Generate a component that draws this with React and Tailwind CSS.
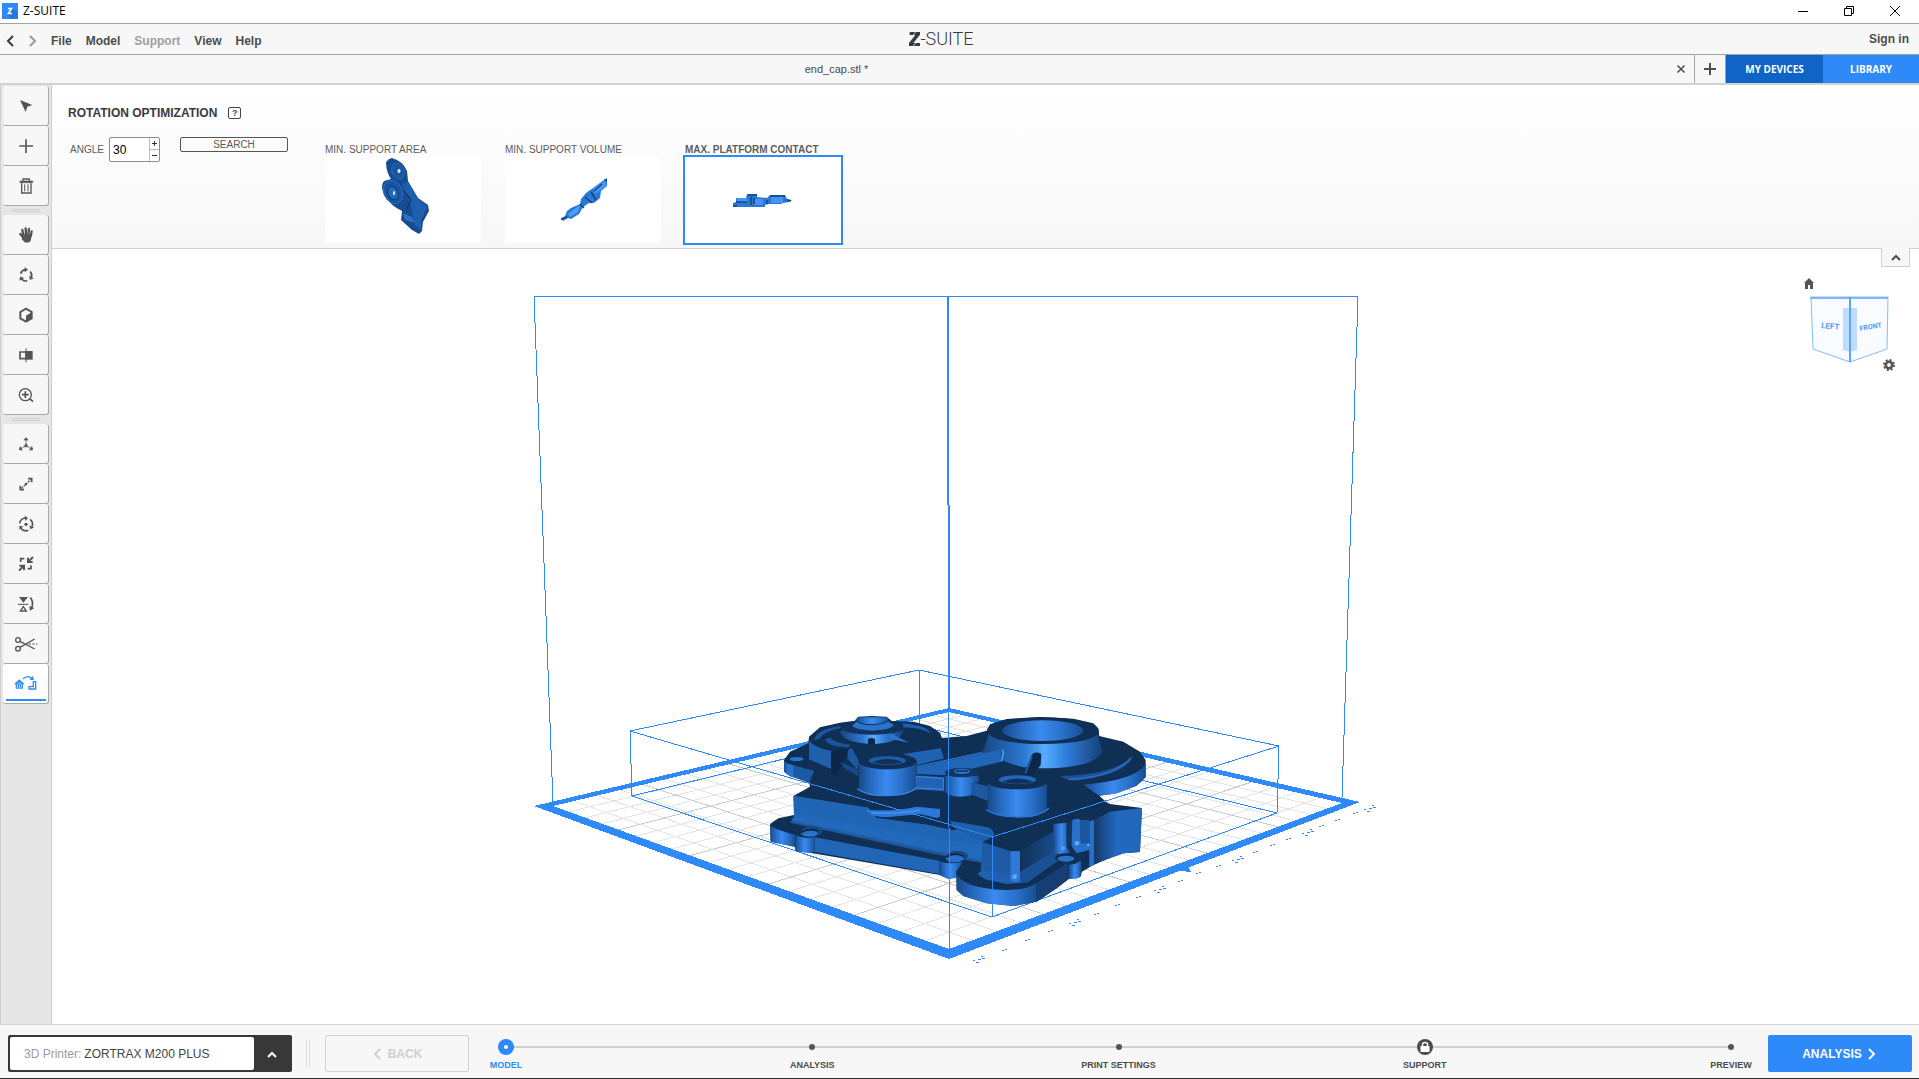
import { useState } from 'react'
import clsx from 'clsx'

const BLUE = '#2d8af8'

const MENU = ['File', 'Model', 'Support', 'View', 'Help']

const STEPS = [
  { label: 'MODEL', state: 'active' },
  { label: 'ANALYSIS' },
  { label: 'PRINT SETTINGS' },
  { label: 'SUPPORT', state: 'locked' },
  { label: 'PREVIEW' },
]

const arc3 = [0, 120, 240]

// every tool icon is drawn on a 72 x 72 grid
const ICONS = {
  select: <path d="M18 18 55 33 40 38 35 54Z" fill="currentColor" />,
  add: <path d="M36 16V57M16 36H57" stroke="currentColor" strokeWidth="5" fill="none" />,
  remove: (
    <g fill="none" stroke="currentColor" strokeWidth="4">
      <path d="M27 20V15H46V20" />
      <path d="M18 21H56V26H18Z" fill="currentColor" strokeWidth="2" />
      <path d="M23 28V57H51V28" />
      <path d="M32 31V52M42 31V52" strokeWidth="3" />
    </g>
  ),
  pan: (
    <g stroke="currentColor" strokeLinecap="round" strokeWidth="7" fill="currentColor">
      <path d="M28 36 25 21M36 34 35 16M43 34 45 18M50 40 53 25M29 45 19 33" />
      <path d="M28 36H50L48 52 43 56H34L26 48Z" strokeWidth="5" strokeLinejoin="round" />
    </g>
  ),
  orbit: (
    <g fill="none" stroke="currentColor" strokeWidth="5">
      {arc3.map((a) => (
        <g key={a} transform={`rotate(${a} 36 37)`}>
          <path d="M20 32A17 17 0 0 1 34 20" />
          <path d="M32 12 42 20 32 28Z" fill="currentColor" stroke="none" />
        </g>
      ))}
    </g>
  ),
  views: (
    <g>
      <path d="M36 17 53 27V46L36 56 19 46V27Z" fill="none" stroke="currentColor" strokeWidth="6" />
      <path d="M36 38 53 28V46L36 56Z" fill="currentColor" />
    </g>
  ),
  mirrorView: (
    <g>
      <path d="M18 27H36V47H18Z" fill="none" stroke="currentColor" strokeWidth="5" />
      <path d="M36 24H56V50H36Z" fill="currentColor" />
      <path d="M36 16V58" stroke="currentColor" strokeWidth="3" />
    </g>
  ),
  zoom: (
    <g fill="none" stroke="currentColor" strokeWidth="5">
      <circle cx="34" cy="35" r="18" strokeWidth="4" />
      <path d="M34 25V45M24 35H44M47 47 57 56" />
    </g>
  ),
  move: (
    <g>
      <circle cx="36" cy="41" r="5" fill="currentColor" />
      {arc3.map((a) => (
        <g key={a} transform={`rotate(${a} 36 41)`}>
          <path d="M36 36V24" stroke="currentColor" strokeWidth="4" strokeDasharray="4 3" />
          <path d="M28 25 36 16 44 25Z" fill="currentColor" />
        </g>
      ))}
    </g>
  ),
  scale: (
    <g fill="none" stroke="currentColor" strokeWidth="5">
      <path d="M23 49 50 23" strokeDasharray="5 4" />
      <path d="M42 20H53V31M19 41V53H30" />
      <circle cx="36" cy="36" r="4" fill="currentColor" stroke="none" />
    </g>
  ),
  rotate: (
    <g fill="none" stroke="currentColor" strokeWidth="5">
      <circle cx="36" cy="37" r="5" fill="currentColor" stroke="none" />
      {arc3.map((a) => (
        <g key={a} transform={`rotate(${a} 36 37)`}>
          <path d="M17 34A19 19 0 0 1 33 18" />
          <path d="M32 11 42 18 34 27Z" fill="currentColor" stroke="none" />
        </g>
      ))}
    </g>
  ),
  fit: (
    <g fill="none" stroke="currentColor" strokeWidth="6">
      <path d="M20 30V20H31M41 50H51V40" strokeWidth="5" />
      <path d="M57 15 43 29M42 17V30H56M15 56 29 42M16 41H30V54" />
    </g>
  ),
  flip: (
    <g>
      <path d="M15 15H42L28 32Z" fill="currentColor" />
      <path d="M12 37H43" stroke="currentColor" strokeWidth="3" />
      <path d="M19 57H37L28 44Z" fill="none" stroke="currentColor" strokeWidth="4" />
      <path d="M49 17Q60 29 53 48" fill="none" stroke="currentColor" strokeWidth="5" />
      <path d="M46 42 61 48 48 56Z" fill="currentColor" />
    </g>
  ),
  split: (
    <g fill="none" stroke="currentColor" strokeWidth="4">
      <circle cx="12" cy="24" r="7" />
      <circle cx="12" cy="50" r="7" />
      <path d="M18 28 62 51M18 46 62 21" />
      <path d="M44 36H70" strokeWidth="3" strokeDasharray="7 4" />
    </g>
  ),
  optimize: (
    <g fill="none" stroke="currentColor">
      <path d="M0 43 16 28 32 43H27V56H5V43Z" fill="currentColor" stroke="none" />
      <path d="M10 55V43L16 37 22 43V55M16 43V55" stroke="#fff" strokeWidth="2" />
      <path d="M27 27Q41 13 54 26" strokeWidth="4" />
      <path d="M47 30 60 30 56 18Z" fill="currentColor" stroke="none" />
      <path d="M45 50H58V35H65V57H45Z" strokeWidth="4" />
    </g>
  ),
}

const TOOL_GROUPS = [
  [
    ['select', 'Select'],
    ['add', 'Add model'],
    ['remove', 'Remove'],
  ],
  [
    ['pan', 'Pan'],
    ['orbit', 'Orbit'],
    ['views', 'Views'],
    ['mirrorView', 'Shading'],
    ['zoom', 'Zoom'],
  ],
  [
    ['move', 'Move'],
    ['scale', 'Scale'],
    ['rotate', 'Rotate'],
    ['fit', 'Fit'],
    ['flip', 'Mirror'],
    ['split', 'Split'],
    ['optimize', 'Rotation optimization'],
  ],
]

function Chevron({ dir, className }) {
  const paths = { left: 'M8 1 3 6 8 11', right: 'M3 1 8 6 3 11', up: 'M2 9 6 5 10 9' }
  return (
    <svg viewBox="0 0 12 12" className={clsx('size-3', className)} fill="none" stroke="currentColor" strokeWidth="2">
      <path d={paths[dir]} />
    </svg>
  )
}

function TitleBar() {
  return (
    <header className="flex h-6 shrink-0 items-center border-b border-[#a3a3a3] bg-white pb-px pl-[2px]">
      <svg viewBox="0 0 16 16" className="size-4">
        <path d="M0 0H16V16H0Z" fill={BLUE} />
        <path d="M10 5 16 10V16H9L6 11Z" fill="#2678dc" />
        <path d="M6 5.5H9.5L6.5 10.5H10" fill="none" stroke="#fff" strokeWidth="1.6" />
      </svg>
      <span className="ml-[5px] font-['Open_Sans',sans-serif] text-xs text-black">Z-SUITE</span>
      <div className="mr-[19px] ml-auto flex gap-9 text-black">
        <button aria-label="Minimize">
          <svg viewBox="0 0 10 10" className="size-[10px]" stroke="currentColor"><path d="M0 5.5H10" /></svg>
        </button>
        <button aria-label="Restore">
          <svg viewBox="0 0 10 10" className="size-[10px]" stroke="currentColor" fill="none"><path d="M.5 2.5H7.5V9.5H.5ZM2.5 2.5V.5H9.5V7.5H7.5" /></svg>
        </button>
        <button aria-label="Close">
          <svg viewBox="0 0 10 10" className="size-[10px]" stroke="currentColor"><path d="M0 0 10 10M10 0 0 10" /></svg>
        </button>
      </div>
    </header>
  )
}

function MenuBar() {
  return (
    <nav className="flex h-[31px] shrink-0 items-center border-b border-[#a3a3a3] bg-[#f7f7f7] font-bold">
      <div className="flex flex-1 items-center pt-[3px]">
        <button aria-label="Undo" className="ml-[5px]"><Chevron dir="left" className="text-[#3a3a3a]" /></button>
        <button aria-label="Redo" className="ml-[10px]"><Chevron dir="right" className="text-[#9a9a9a]" /></button>
        <div className="ml-3 flex gap-[14px]">
          {MENU.map((m) => (
            <button key={m} disabled={m === 'Support'} className="disabled:text-[#9f9f9f]">{m}</button>
          ))}
        </div>
      </div>
      <div className="mr-[26px] flex items-center text-[18px] leading-5 text-[#3a3a3a]">
        <svg viewBox="0 0 33 42" className="h-[14px] w-[11px]" fill="currentColor">
          <path d="M2 0H33V8L13 33H33V42H0V33L19 9H2Z" />
          <path d="M0 24 20 0M13 42 33 18" stroke="#f7f7f7" strokeWidth="2" />
        </svg>
        <span className="font-['Roboto',sans-serif] font-light">-SUITE</span>
      </div>
      <div className="flex flex-1 justify-end pr-[10px] pb-px">
        <button>Sign in</button>
      </div>
    </nav>
  )
}

function TabBar() {
  return (
    <div className="flex h-[30px] shrink-0 border-b-2 border-[#d2d2d2] bg-[#f7f7f7]">
      <div className="flex flex-1 items-center">
        <span className="flex-1 pr-1 text-center text-[11px] text-[#4a4a4a]">end_cap.stl *</span>
        <button aria-label="Close tab" className="mr-[9px]">
          <svg viewBox="0 0 8 8" className="size-2" stroke="currentColor" strokeWidth="1.5"><path d="M.5 .5 7.5 7.5M7.5 .5 .5 7.5" /></svg>
        </button>
      </div>
      <button aria-label="New tab" className="flex w-8 items-center justify-center border-x border-[#a3a3a3]">
        <svg viewBox="0 0 12 12" className="size-3" stroke="currentColor" strokeWidth="2"><path d="M6 0V12M0 6H12" /></svg>
      </button>
      <div className="flex font-['Open_Sans',sans-serif] text-[10px] font-bold text-white">
        <button className="w-[97px] bg-[#1064c8] pt-[2px]">MY DEVICES</button>
        <button className="w-24 bg-[#2d8af8] pt-[2px]">LIBRARY</button>
      </div>
    </div>
  )
}

function Sidebar() {
  const [active, setActive] = useState('optimize')
  return (
    <aside className="w-[52px] shrink-0 border-x border-[#cfcfcf] bg-[#e6e6e6] px-[2px] pt-px">
      {TOOL_GROUPS.map((group, i) => (
        <div key={i}>
          {i > 0 && (
            <div className="flex h-[9px] items-center justify-center">
              <div className="h-[3px] w-7 border-y border-[#cdcfd4]" />
            </div>
          )}
          {group.map(([id, label]) => (
            <button
              key={id}
              aria-label={label}
              aria-pressed={active === id}
              onClick={() => setActive(id)}
              className={clsx(
                'flex h-10 w-[46px] flex-col items-center justify-end rounded-[3px] border-r border-b border-[#a9a9a9]',
                active === id ? 'bg-white text-[#2d8af8]' : 'bg-[#f7f7f7] text-[#555]',
              )}
            >
              <svg viewBox="0 0 72 72" className="my-auto size-6 overflow-visible">{ICONS[id]}</svg>
              {active === id && <span className="mb-[2px] h-[2px] w-10 bg-[#2d8af8]" />}
            </button>
          ))}
        </div>
      ))}
    </aside>
  )
}

function AreaPreview() {
  return (
    <svg viewBox="0 0 156 86" className="size-full">
      <path d="M61 5 64 2 67 1Q78 4 82 14L83 24 93 41 103 48 104 54 98 65 97 74 94 77 87 73 76 63 77 54Q66 49 59 38 55 28 59 24L66 22Q61 15 61 5Z" fill="#174d90" />
      <path d="M83 25 93 42 102 50 97 61 96 73 90 68 88 58 84 44 77 27Z" fill="#1e60ae" />
      <ellipse cx="73" cy="14" rx="6" ry="8" fill="#1a559f" stroke="#2468b8" transform="rotate(-25 73 14)" />
      <ellipse cx="74" cy="14" rx="1.5" ry="2" fill="#e8f2ff" />
      <ellipse cx="68" cy="35" rx="9" ry="12" fill="#1a559f" stroke="#276fc4" transform="rotate(-25 68 35)" />
      <ellipse cx="68" cy="36" rx="5" ry="7" fill="#2368b9" stroke="#123a6d" transform="rotate(-25 68 36)" />
      <ellipse cx="69" cy="36" rx="1" ry="2" fill="#e8f2ff" />
      <path d="M78 56 87 60 90 66 80 63Z" fill="#2a72c8" />
      <path d="M79 34 86 43 82 52" fill="none" stroke="#123a6d" strokeWidth="1.5" />
    </svg>
  )
}

function VolumePreview() {
  return (
    <svg viewBox="0 0 156 86" className="size-full">
      <path d="M56 62 60 59 62 54 66 51 75 47 76 42 81 36 88 31 99 23 102 21 102 29 96 34 95 41 89 46 84 46 78 50 74 57 66 62 63 61 58 64Z" fill="#2b78d4" />
      <path d="M88 31 100 24 102 29 90 37Z" fill="#4496f6" />
      <path d="M63 57 75 48 73 55 65 60Z" fill="#4aa0ff" />
      <path d="M80 40 87 46M86 35 91 43M75 47 79 51M56 62 62 60M89 34 97 27" stroke="#14457f" strokeWidth="1.5" fill="none" />
      <path d="M99 22 102 22 102 25Z" fill="#14457f" />
    </svg>
  )
}

function ContactPreview() {
  return (
    <svg viewBox="0 0 156 86" className="size-full">
      <path d="M48 49V46L51 45V41H61L62 37H72V40L82 41 85 38H100L102 42 107 43 104 45 98 46 96 47H84L80 48V50H48Z" fill="#2b78d4" />
      <path d="M52 41H62V45H52ZM70 42H78V48H70ZM86 40H98V46H86Z" fill="#4496f6" />
      <path d="M63 38H72M66 40V48M62 45H51M82 43V47M85 39H100M102 43 106 44M69 41V47M48 49H52" stroke="#14457f" strokeWidth="1.5" fill="none" />
    </svg>
  )
}

const RESULTS = [
  { label: 'MIN. SUPPORT AREA', Preview: AreaPreview },
  { label: 'MIN. SUPPORT VOLUME', Preview: VolumePreview },
  { label: 'MAX. PLATFORM CONTACT', Preview: ContactPreview },
]

function OptimizationPanel() {
  const [angle, setAngle] = useState(30)
  const [selected, setSelected] = useState(2)
  return (
    <section className="relative h-[164px] shrink-0 border-b border-[#cfcfcf] bg-linear-to-b from-white to-[#f7f7f7] pt-5">
      <div className="flex h-4 items-center pl-4">
        <h1 className="text-xs font-bold text-[#3a3a3a]">ROTATION OPTIMIZATION</h1>
        <button aria-label="Help" className="ml-[11px] flex h-3 w-[13px] items-center justify-center rounded-[2px] border border-[#444] text-[9px] leading-none font-bold">?</button>
      </div>
      <div className="flex items-start pt-4 pl-[18px] text-[10px] leading-3 text-[#5c5c5c]">
        <label htmlFor="angle" className="w-[39px] pt-[7px]">ANGLE</label>
        <div className="flex h-[25px] w-[51px] rounded-[2px] border border-[#8c8c8c] bg-white">
          <input id="angle" value={angle} onChange={(e) => setAngle(e.target.value)} className="w-[39px] pt-px pl-[3px] text-xs text-black outline-none" />
          <div className="flex flex-1 flex-col border-l border-[#bdbdbd] text-[#333]">
            <button aria-label="Increase" onClick={() => setAngle(Number(angle) + 1)} className="flex flex-1 items-center justify-center border-b border-[#bdbdbd]">
              <svg viewBox="0 0 5 5" className="size-[5px]" stroke="currentColor"><path d="M2.5 0V5M0 2.5H5" /></svg>
            </button>
            <button aria-label="Decrease" onClick={() => setAngle(Number(angle) - 1)} className="flex flex-1 items-center justify-center">
              <svg viewBox="0 0 5 5" className="size-[5px]" stroke="currentColor"><path d="M0 2.5H5" /></svg>
            </button>
          </div>
        </div>
        <button className="ml-5 h-[15px] w-[108px] rounded-[2px] border border-[#555] bg-[#fbfbfb]">SEARCH</button>
        <div className="ml-[35px] flex gap-5 pt-[6px]">
          {RESULTS.map(({ label, Preview }, i) => (
            <button key={label} onClick={() => setSelected(i)} className={clsx('w-40 text-left', selected === i && 'font-bold')}>
              <span className="block h-3 pl-[2px] leading-[14px]">{label}</span>
              <span className={clsx('block h-[90px] border-2 bg-white bg-clip-padding', selected === i ? 'border-[#2d8af8]' : 'border-transparent')}>
                <Preview />
              </span>
            </button>
          ))}
        </div>
      </div>
      <button aria-label="Collapse panel" className="absolute top-[163px] right-[9px] z-10 flex h-[19px] w-[29px] items-center justify-center border border-t-0 border-[#cfcfcf] bg-[#f7f7f7]">
        <Chevron dir="up" />
      </button>
    </section>
  )
}

// maps the unit square onto the platform: left, back, right, front corners
function makeProjection([x0, y0], [x1, y1], [x2, y2], [x3, y3]) {
  const dx1 = x1 - x2
  const dx2 = x3 - x2
  const dy1 = y1 - y2
  const dy2 = y3 - y2
  const sx = x0 - x1 + x2 - x3
  const sy = y0 - y1 + y2 - y3
  const d = dx1 * dy2 - dx2 * dy1
  const g = (sx * dy2 - dx2 * sy) / d
  const h = (dx1 * sy - sx * dy1) / d
  return (u, v) => {
    const w = g * u + h * v + 1
    return [((x1 - x0 + g * x1) * u + (x3 - x0 + h * x3) * v + x0) / w, ((y1 - y0 + g * y1) * u + (y3 - y0 + h * y3) * v + y0) / w]
  }
}

const project = makeProjection([550, 807], [949, 711], [1344, 803], [949, 950])

function GridLines() {
  const lines = []
  for (let i = 1; i < 20; i++) {
    const t = i / 20
    lines.push({ major: i % 4 === 0, a: project(t, 0), b: project(t, 1) })
    lines.push({ major: i % 4 === 0, a: project(0, t), b: project(1, t) })
  }
  lines.sort((p, q) => p.major - q.major)
  return lines.map(({ major, a, b }, i) => (
    <line key={i} x1={a[0]} y1={a[1]} x2={b[0]} y2={b[1]} stroke={major ? '#cbcbcb' : '#e4e4e4'} />
  ))
}

const SCALE_MARKS = [
  [978, 959, 1], [1004, 950], [1027, 940], [1050, 931], [1074, 922, 1], [1096, 914], [1117, 905], [1138, 897],
  [1159, 889, 1], [1180, 881], [1198, 873], [1218, 866], [1237, 859, 1], [1255, 852], [1272, 845], [1288, 839],
  [1307, 832, 1], [1321, 826], [1337, 820], [1355, 813], [1369, 808, 1],
]

function EndCap() {
  return (
    <g transform="translate(740 690) scale(.3333)">
      <defs>
        <linearGradient id="cyl">
          <stop offset="0" stopColor="#174a8a" />
          <stop offset=".2" stopColor="#2468bc" />
          <stop offset=".48" stopColor="#3b8af0" />
          <stop offset=".75" stopColor="#2870c8" />
          <stop offset="1" stopColor="#184e92" />
        </linearGradient>
        <linearGradient id="cone">
          <stop offset="0" stopColor="#164580" />
          <stop offset=".35" stopColor="#2d78d2" />
          <stop offset=".52" stopColor="#58acff" />
          <stop offset=".7" stopColor="#2f7cda" />
          <stop offset="1" stopColor="#153f76" />
        </linearGradient>
        <linearGradient id="fillet" gradientUnits="userSpaceOnUse" x1="440" y1="415" x2="428" y2="472">
          <stop offset="0" stopColor="#2268bb" />
          <stop offset=".55" stopColor="#2369bc" />
          <stop offset="1" stopColor="#12345e" />
        </linearGradient>
        <linearGradient id="side">
          <stop offset="0" stopColor="#13365f" />
          <stop offset=".25" stopColor="#1a5093" />
          <stop offset=".5" stopColor="#226abf" />
          <stop offset="1" stopColor="#2166b9" />
        </linearGradient>
        <linearGradient id="shade">
          <stop offset="0" stopColor="#12325a" />
          <stop offset="1" stopColor="#194c8c" />
        </linearGradient>
      </defs>

      {/* silhouette */}
      <path
        fill="#102f55"
        d="M132 210 150 185 205 160 207 140 240 112 300 98 345 92 355 80 395 78 440 80 455 93 520 95 570 108 600 128 606 144 680 138 740 122 750 103 800 87 900 81 1000 86 1060 100 1075 115 1078 138 1150 155 1200 185 1217 210V262L1190 287 1130 310 1078 317 1098 335 1110 342 1206 354 1200 486 1150 490 1100 508 1060 525 1026 545 1020 562 987 566 950 595 890 635 820 648 740 640 670 618 650 600V562L625 567 600 555 210 488 168 484 165 470 92 455 90 402 115 385 162 375 160 318 210 290 208 278 150 258 132 245Z"
      />

      {/* small disc, back left */}
      <path d="M132 212Q136 220 160 226L222 242 208 277 150 258 132 245Z" fill="#1d5aa4" />
      <path d="M140 220 160 226V262L140 252Z" fill="#2a72ca" />
      <path d="M207 152Q222 172 275 183V238L207 208Z" fill="#1f5fab" />
      <path d="M222 150Q230 118 300 108L303 114Q250 124 238 148Z" fill="#1c569c" />
      <path d="M488 100Q560 106 572 130Q540 112 490 112Z" fill="#1f60ae" />
      <path d="M255 150Q270 172 325 172L332 164Q290 162 268 142Z" fill="#1b5398" />
      <path d="M300 125Q310 158 395 162Q478 160 492 122L455 105H345Z" fill="url(#cone)" />
      <path d="M302 118Q330 96 350 96H450Q480 100 492 118Q470 134 396 134Q330 134 302 118Z" fill="#11325c" />
      <path d="M336 108Q350 120 396 122Q450 120 462 106L442 92H352Z" fill="#2a72ca" />
      <path d="M347 93 352 82H440L448 93Q440 104 396 104 355 104 347 93Z" fill="url(#cyl)" />
      <path d="M347 90Q362 105 396 104T448 90" fill="none" stroke="#11325c" strokeWidth="3" />
      <path d="M384 162V148Q394 140 405 148V162Z" fill="#0e2749" />
      <path d="M446 138 455 148 508 158 450 130Z" fill="#2c76d0" />
      <path d="M325 180 335 174 358 215 352 240 322 205Z" fill="#1d59a2" />
      <path d="M273 185 322 175 310 215 288 260 273 250Z" fill="#0e2749" />
      <path d="M300 215 355 240 355 258 316 238Z" fill="#174a88" />
      <ellipse cx="170" cy="207" rx="21" ry="6" fill="#2b74cd" />
      <path d="M490 192 602 175 612 205 530 226V212Z" fill="#2062b2" />
      <path d="M530 232 785 177V215L612 256 530 252Z" fill="#2165b6" />
      <path d="M530 230 778 176" stroke="#3280dc" strokeWidth="3" />

      {/* large ring, back right */}
      <path d="M960 258Q1130 254 1178 196Q1170 250 1010 272 985 274 960 258Z" fill="#1b5296" />
      <path d="M985 268Q1120 262 1172 205" fill="none" stroke="#2a72ca" strokeWidth="4" />
      <path d="M1030 284Q1190 270 1217 222V262L1190 287 1130 310 1078 317Z" fill="url(#cyl)" />
      <path d="M725 190Q745 150 750 112Q820 160 910 160T1070 125L1088 185Q1060 236 900 235 830 234 787 210L785 178Z" fill="url(#cone)" />
      <path d="M742 120Q750 84 905 82 1060 84 1077 122 1070 161 905 162 745 160 742 120Z" fill="#102f55" />
      <ellipse cx="908" cy="122" rx="122" ry="31" fill="url(#cyl)" />
      <path d="M787 178 790 190 785 214" stroke="#4a9cf8" strokeWidth="5" fill="none" />
      <path d="M875 195Q885 182 904 192L902 225 878 256 852 252Z" fill="#0d2748" />
      <path d="M876 200 856 250" stroke="#1f5ca4" strokeWidth="5" />

      {/* posts and ribs */}
      <path d="M522 256 612 262V304L522 298Z" fill="#2263b3" />
      <path d="M528 260 610 265V298L526 294Z" fill="none" stroke="#3a88ea" strokeWidth="3" />
      <path d="M695 275 745 290V333L695 314Z" fill="#1d58a0" />
      <path d="M614 258H716V275L695 280V316Q655 325 625 314L614 304Z" fill="url(#cyl)" />
      <ellipse cx="665" cy="248" rx="50" ry="14" fill="#123763" />
      <ellipse cx="666" cy="244" rx="24" ry="8" fill="#2a72ca" />
      <path d="M648 243H684" stroke="#0e2749" strokeWidth="4" />

      <path d="M357 215V300Q375 316 443 317 510 314 528 296V215Z" fill="url(#cyl)" />
      <path d="M352 296Q380 318 443 317T532 292" fill="none" stroke="#3884e4" strokeWidth="4" />
      <ellipse cx="443" cy="214" rx="87" ry="24" fill="#102f55" />
      <ellipse cx="442" cy="212" rx="56" ry="13" fill="#1f5dab" />
      <path d="M396 217Q442 196 490 217 442 230 396 217Z" fill="#113158" />

      <path d="M743 282V360Q760 380 832 381 905 378 921 356V282Z" fill="url(#cyl)" />
      <path d="M738 358Q765 380 832 381T927 354" fill="none" stroke="#2f78d6" strokeWidth="4" />
      <ellipse cx="832" cy="276" rx="90" ry="22" fill="#102f55" />
      <ellipse cx="832" cy="269" rx="56" ry="13" fill="#2468bc" />
      <path d="M786 275Q832 256 880 275 832 288 786 275Z" fill="#113158" />

      {/* main body, left face */}
      <path d="M162 318 385 353 410 384 560 404 640 421 700 408 762 428 760 440 728 456V520L590 494 150 398 162 380Z" fill="url(#fillet)" />
      <path d="M162 318 385 353 410 384 560 404 640 421 728 456 700 462 162 372Z" fill="#2064b4" />
      <path d="M380 360Q470 364 530 350L600 357V380L590 384 540 372 440 382Q390 380 380 360Z" fill="#2d78d6" />
      <path d="M395 368Q470 374 540 360" fill="none" stroke="#3f92f6" strokeWidth="5" />
      <path d="M630 392 745 412Q765 420 760 440L728 456 690 440 640 412Z" fill="#1e5eaa" />

      {/* base flange */}
      <path d="M90 402Q92 416 165 434V470L92 455Z" fill="url(#cyl)" />
      <path d="M225 442 598 512V552L225 486Z" fill="#2165b6" />
      <path d="M166 434Q200 450 225 440V486Q195 492 166 482Z" fill="url(#cyl)" />
      <ellipse cx="216" cy="424" rx="32" ry="16" fill="#17477f" />
      <ellipse cx="208" cy="430" rx="25" ry="10" fill="#2a72ca" />
      <path d="M184 428Q208 412 236 424" fill="none" stroke="#0e2749" strokeWidth="5" />
      <path d="M598 512Q625 526 668 516L648 545V564L625 567 598 555Z" fill="url(#cyl)" />
      <ellipse cx="652" cy="498" rx="32" ry="15" fill="#17477f" />
      <ellipse cx="644" cy="505" rx="27" ry="12" fill="#2a72ca" />
      <path d="M618 502Q645 484 672 500" fill="none" stroke="#0e2749" strokeWidth="5" />

      {/* front corner */}
      <path d="M728 456 757 441 840 483 812 486V570L735 556 722 545Z" fill="#1e5ba4" />
      <path d="M728 456 757 441 842 483 812 484Z" fill="#102f55" />
      <path d="M840 484 948 420 945 500 840 560Z" fill="url(#shade)" />
      <path d="M840 545 950 480 958 510 860 580 838 574Z" fill="#1a5094" />
      <path d="M712 552 728 540 815 556 850 578 800 582 735 568Z" fill="#1f60b0" />
      <path d="M811 484H840V570Q826 584 811 570Z" fill="#3079d8" />
      <circle cx="824" cy="560" r="7" fill="#5aaeff" />
      <path d="M648 545Q660 595 800 600 860 600 890 578V635L820 648 740 640 670 618 650 600Z" fill="url(#cyl)" />
      <path d="M890 580 985 515 987 566 950 595 890 635Z" fill="#153e72" />

      {/* right face */}
      <path d="M1058 392 1110 365 1206 354 1200 486 1150 490 1100 508 1058 526Z" fill="url(#side)" />
      <path d="M940 402 980 398V470L990 488 965 496 940 485Z" fill="url(#cyl)" />
      <path d="M980 400 998 392V460L980 470Z" fill="#133763" />
      <path d="M997 390Q1020 382 1022 392V450L1048 460V395L1062 390V525L1048 530V480L1010 490 995 468Z" fill="#2871cb" />
      <path d="M1022 390H1048V460H1022Z" fill="#1c569e" />
      <circle cx="1011" cy="460" r="7" fill="#5aaeff" />
      <circle cx="1045" cy="465" r="4" fill="#5aaeff" />
      <circle cx="970" cy="474" r="6" fill="#4fa4ff" />
      <ellipse cx="976" cy="503" rx="30" ry="13" fill="#102f55" />
      <ellipse cx="978" cy="506" rx="25" ry="9" fill="#2a72ca" />
      <path d="M987 524Q1010 524 1024 510V558L1010 566H987Z" fill="url(#cyl)" />
    </g>
  )
}

function NavCube() {
  return (
    <div className="absolute top-[29px] right-[25px] flex w-[90px] flex-col text-[#555]">
      <button aria-label="Home view" className="w-[10px]">
        <svg viewBox="0 0 10 11" className="h-[11px] w-[10px]" fill="currentColor"><path d="M5 0 10 5H9V11H6V7H4V11H1V5H0Z" /></svg>
      </button>
      <svg viewBox="0 0 90 70" className="mt-[6px] h-[70px] w-[90px]">
        <g fill="#f8fbff" stroke="#86bbfb">
          <path d="M7 2H46V67L9 54Z" />
          <path d="M46 2H84L83 54 46 67Z" />
        </g>
        <path d="M6 3H84" stroke="#7db6fb" strokeWidth="2" />
        <path d="M39 13H53V55L46 57 39 55Z" fill="#bfdcfd" />
        <path d="M46 2V67" stroke="#5ea5f9" strokeWidth="2" />
        <g className="font-['Roboto',sans-serif]" fill="#4e9cf8" fontSize="8" fontWeight="bold">
          <text x="17" y="33" transform="rotate(5 17 33)">LEFT</text>
          <text x="56" y="36" fontSize="7" transform="rotate(-10 56 36)">FRONT</text>
        </g>
      </svg>
      <button aria-label="View settings" className="-mt-[6px] -mr-px self-end">
        <svg viewBox="0 0 12 12" className="size-3" fill="none" stroke="currentColor">
          <circle cx="6" cy="6" r="3.2" strokeWidth="2.6" />
          <circle cx="6" cy="6" r="5" strokeWidth="2" strokeDasharray="2 1.93" />
        </svg>
      </button>
    </div>
  )
}

function Viewport() {
  return (
    <main className="relative min-h-0 flex-1 bg-white">
      <svg viewBox="52 249 1867 775" className="size-full" role="img" aria-label="Build platform with model">
        <g shapeRendering="crispEdges" fill="none" stroke={BLUE}>
          <GridLines />
          <path fill={BLUE} stroke="none" fillRule="evenodd" d="M534 806 949 708 1360 802 949 959ZM553 806 949 949 1342 803 949 712Z" />
          <path fill={BLUE} stroke="none" d="M1172 870 1188 866 1191 872Z" />
          <path d="M534 296.5H1358M534 296 553 803M1358 296 1342 798" />
          <path d="M948 296 949 710" strokeWidth="2" />
          <path d="M632 796 919 726 1277 813 992 917Z" />
          <path d="M919 670V726" />
        </g>
        <EndCap />
        <g shapeRendering="crispEdges" fill="none" stroke={BLUE}>
          <path d="M630 731 919 670 1279 746 992 837ZM630 731 632 796M1279 746 1277 813M992.5 837V917M948.5 700 949.5 950" />
          {SCALE_MARKS.map(([x, y, big]) => (
            <path
              key={x}
              d={big ? `M${x - 5} ${y + 1}h2m1 2h3m-1 -3h3m1 -1h3m-4 -2h2` : `M${x - 2} ${y}h2m1 -1h2`}
            />
          ))}
        </g>
      </svg>
      <NavCube />
    </main>
  )
}

function StepDot({ state }) {
  if (state === 'active') {
    return <span className="flex size-4 items-center justify-center rounded-full bg-[#2d8af8]"><span className="size-1 rounded-full bg-white" /></span>
  }
  if (state === 'locked') {
    return (
      <svg viewBox="0 0 16 16" className="size-4">
        <circle cx="8" cy="8" r="8" fill="#4c4c4c" />
        <path d="M3.5 7H12.5V13H3.5Z" fill="#fff" />
        <path d="M5.5 8V5.5Q5.5 3.5 8 3.5T10.5 5.5V8" fill="none" stroke="#fff" strokeWidth="1.5" />
      </svg>
    )
  }
  return <span className="size-[6px] rounded-full bg-[#555]" />
}

function Footer() {
  return (
    <footer className="flex h-[55px] shrink-0 items-center border-t border-b border-t-[#d2d2d2] border-b-[#2e2e2e] bg-[#f7f7f7] pt-1 pr-[7px] pl-2">
      <button className="flex h-[37px] w-[284px] rounded-[2px] border-2 border-[#383838] bg-[#383838] text-xs text-[#444]">
        <span className="flex h-full flex-1 items-center rounded-[2px] bg-white pl-[14px]">
          <span className="mr-[3px] text-[#9b9b9b]">3D Printer:</span>ZORTRAX M200 PLUS
        </span>
        <span className="flex h-full w-9 items-center justify-center text-white"><Chevron dir="up" /></span>
      </button>
      <div className="ml-[14px] h-[27px] w-1 border-x border-[#dcdcdc]" />
      <button disabled className="ml-[15px] flex h-[37px] w-36 items-center justify-center gap-1 rounded-[2px] border border-[#d2d2d2] font-bold text-[#cfcfcf]">
        <Chevron dir="left" />BACK
      </button>
      <div className="relative mr-[37px] ml-[37px] h-full flex-1 text-[9px] leading-3 font-bold text-[#4c4c4c]">
        <div className="absolute inset-x-0 top-[17px] h-[2px] bg-[#cfcfcf]" />
        <ol className="relative flex justify-between pt-[10px]">
          {STEPS.map(({ label, state }) => (
            <li key={label} className={clsx('flex w-0 flex-col items-center gap-1 whitespace-nowrap', state === 'active' && 'text-[#2d8af8]')}>
              <span className="flex h-4 items-center"><StepDot state={state} /></span>
              <span>{label}</span>
            </li>
          ))}
        </ol>
      </div>
      <button className="flex h-[37px] w-36 items-center justify-center gap-1 rounded-[2px] bg-[#2d8af8] font-bold text-white">
        ANALYSIS<Chevron dir="right" />
      </button>
    </footer>
  )
}

export default function App() {
  return (
    <div className="flex h-screen flex-col overflow-hidden bg-white font-['Liberation_Sans',Arial,sans-serif] text-xs text-[#4c4c4c]">
      <TitleBar />
      <MenuBar />
      <TabBar />
      <div className="flex min-h-0 flex-1">
        <Sidebar />
        <div className="flex min-w-0 flex-1 flex-col">
          <OptimizationPanel />
          <Viewport />
        </div>
      </div>
      <Footer />
    </div>
  )
}
